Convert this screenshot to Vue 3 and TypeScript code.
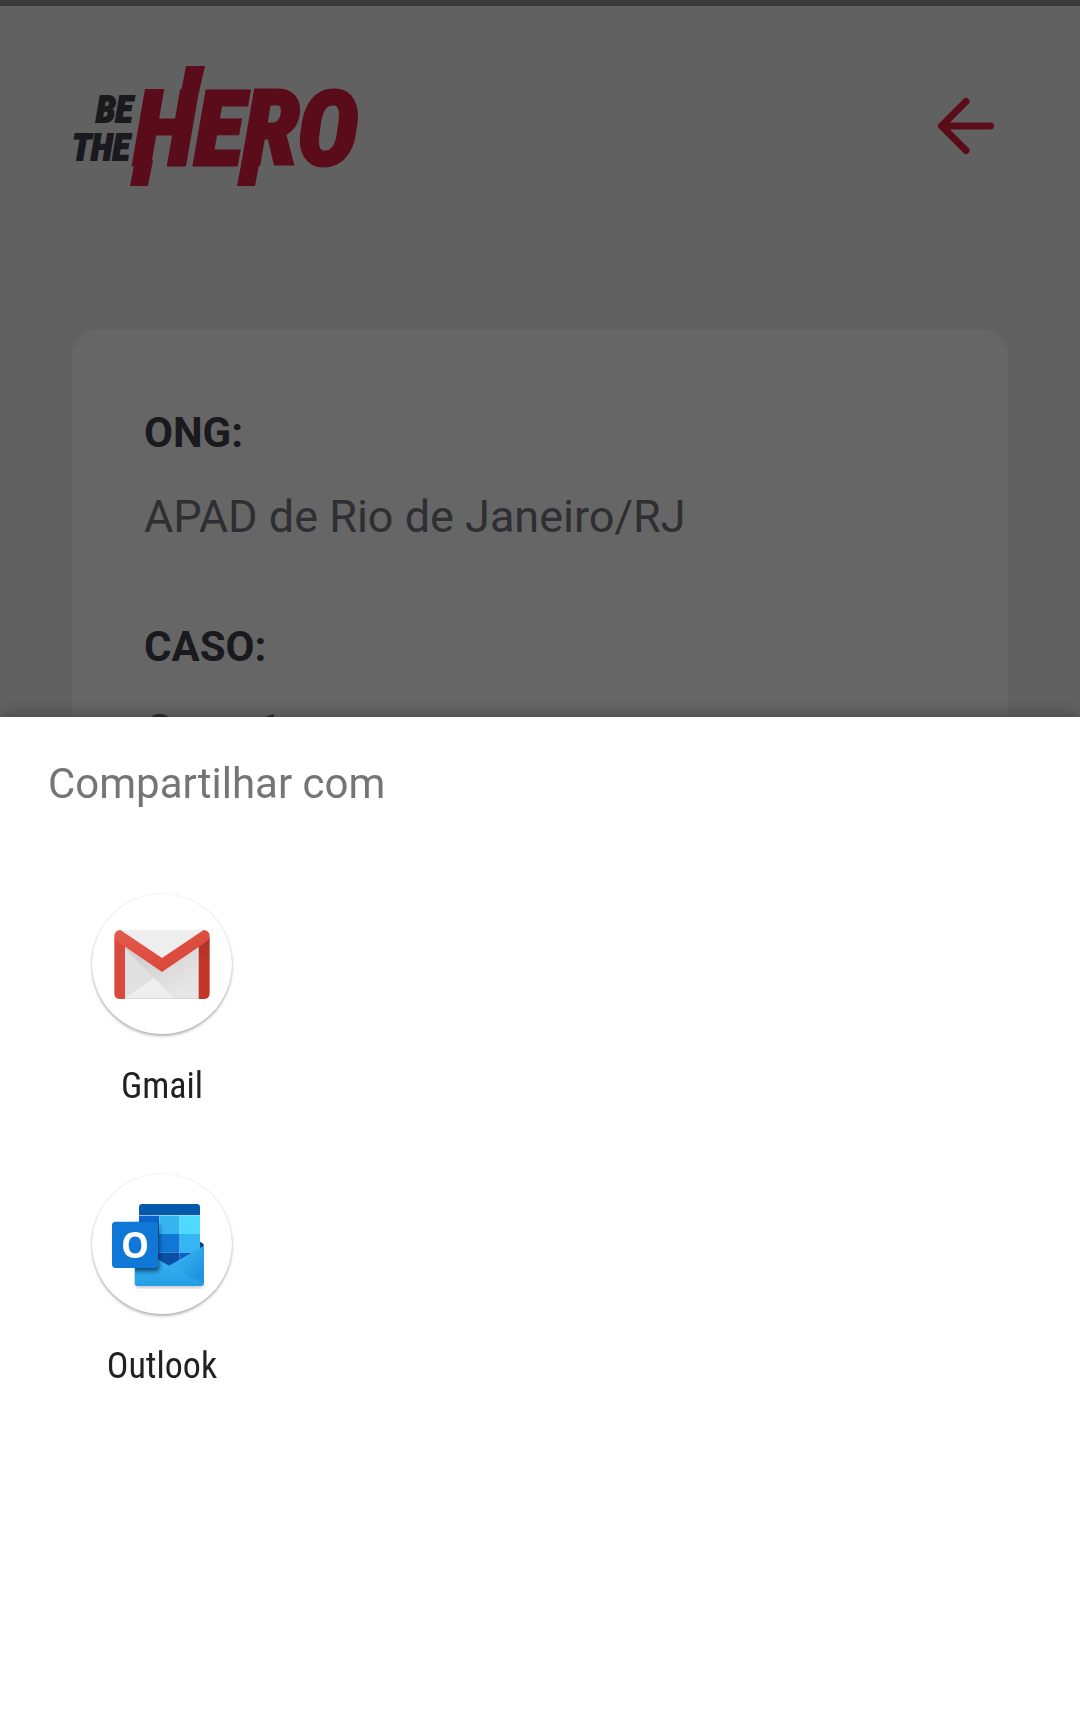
<script setup lang="ts">
interface Detail {
  label: string
  value: string
}

interface Target {
  id: 'gmail' | 'outlook'
  name: string
}

const details: Detail[] = [
  { label: 'ONG:', value: 'APAD de Rio de Janeiro/RJ' },
  { label: 'CASO:', value: 'Caso 1' },
]

const targets: Target[] = [
  { id: 'gmail', name: 'Gmail' },
  { id: 'outlook', name: 'Outlook' },
]
</script>

<template>
  <div class="screen">
    <div class="status-strip"></div>
    <header class="header">
      <svg class="logo" viewBox="0 0 286 120" role="img" aria-label="Be The Hero">
        <g class="logo-small">
          <text x="24" y="56">BE</text>
          <text x="0" y="94">THE</text>
        </g>
        <g class="logo-big">
          <path d="M114 0H133L127 26H109ZM63 94H81L76 120H58ZM170 94H188L183 120H165Z" />
          <text x="62" y="98">HERO</text>
        </g>
      </svg>
      <button class="back" type="button" aria-label="Voltar">
        <svg viewBox="0 0 24 24">
          <path d="M19 12H5M12 19L5 12L12 5" />
        </svg>
      </button>
    </header>
    <main class="card">
      <dl v-for="item in details" :key="item.label" class="detail">
        <dt>{{ item.label }}</dt>
        <dd>{{ item.value }}</dd>
      </dl>
    </main>
  </div>

  <div class="scrim"></div>

  <section class="sheet" role="dialog" aria-labelledby="share-title">
    <h2 id="share-title">Compartilhar com</h2>
    <ul class="targets">
      <li v-for="target in targets" :key="target.id">
        <button class="target" type="button">
          <svg v-if="target.id === 'gmail'" class="app-icon" viewBox="36 42 420 420" aria-hidden="true">
            <defs>
              <linearGradient id="g-red" x1="0" y1="0" x2="1" y2="1">
                <stop offset="0" stop-color="#e35b4e" />
                <stop offset="1" stop-color="#d84133" />
              </linearGradient>
              <linearGradient id="g-side" x1="0" y1="0" x2="0" y2="1">
                <stop offset="0" stop-color="#a93127" />
                <stop offset="0.4" stop-color="#c23529" />
              </linearGradient>
              <linearGradient id="g-fold" x1="0" y1="0" x2="1" y2="1">
                <stop offset="0.2" stop-color="#cfcfcf" />
                <stop offset="0.8" stop-color="#e6e6e6" />
              </linearGradient>
            </defs>
            <path d="M120 150H372V357H120Z" fill="#eeeeee" />
            <path d="M135 202L246 276L356 202V357H284L135 208Z" fill="url(#g-fold)" />
            <path d="M135 206L222 294L135 354Z" fill="#e0e0e0" />
            <path d="M222 294L135 354V357H284Z" fill="#eeeeee" />
            <path d="M135 355H356V357H135Z" fill="#d2d2d2" />
            <path d="M103 170L135 190V357H121Q103 357 103 339Z" fill="#d84a3d" />
            <path d="M356 190L389 170V339Q389 357 371 357H356Z" fill="url(#g-side)" />
            <path d="M103 168Q104 152 121 150L246 234L371 150Q388 152 389 168Q389 178 381 184L246 276L111 184Q103 178 103 168Z" fill="url(#g-red)" />
          </svg>
          <svg v-else class="app-icon" viewBox="36 42 420 420" aria-hidden="true">
            <defs>
              <linearGradient id="o-body" x1="0" y1="0" x2="0" y2="1">
                <stop offset="0.3" stop-color="#36b6f2" />
                <stop offset="1" stop-color="#259de6" />
              </linearGradient>
              <linearGradient id="o-flap" x1="0.2" y1="0.3" x2="0.7" y2="0.9">
                <stop offset="0" stop-color="#33b1f0" />
                <stop offset="1" stop-color="#2294e0" />
              </linearGradient>
              <filter id="o-shadow" x="-20%" y="-20%" width="150%" height="150%">
                <feGaussianBlur stdDeviation="6" />
              </filter>
              <clipPath id="o-clip">
                <path d="M177 142Q177 132 187 132H350Q360 132 360 142V250L372 258V368Q372 378 362 378H174Q164 378 164 368V132Z" />
              </clipPath>
            </defs>
            <path d="M166 370H370V376Q368 382 360 382H176Q168 382 166 376Z" fill="#000000" opacity="0.3" filter="url(#o-shadow)" />
            <path d="M358 244L370 251Q373 254 370 260L358 268Z" fill="#103f88" />
            <path d="M177 166V142Q177 132 187 132H350Q360 132 360 142V166Z" fill="#0559ab" />
            <path d="M177 167H238V222H177Z" fill="#0c64cf" />
            <path d="M238 167H299V222H238Z" fill="#34b5f0" />
            <path d="M299 167H360V222H299Z" fill="#50d9ff" />
            <path d="M177 222H299V278H177Z" fill="#1077d6" />
            <path d="M299 222H360V278H299Z" fill="#35b5f1" />
            <path d="M177 278H299V325H177Z" fill="#0b4fa6" />
            <path d="M299 278H360V310H299Z" fill="#0c62c6" />
            <path d="M164 260L268 317L372 258V368Q372 378 362 378H174Q164 378 164 368Z" fill="url(#o-body)" />
            <path d="M268 317L372 258V372Z" fill="url(#o-flap)" />
            <g clip-path="url(#o-clip)">
              <rect x="100" y="192" width="138" height="142" rx="10" fill="#002040" opacity="0.7" filter="url(#o-shadow)" />
            </g>
            <rect x="96" y="185" width="138" height="139" rx="11" fill="#0f78d6" />
            <text class="outlook-o" x="165" y="293" text-anchor="middle">O</text>
          </svg>
          <span>{{ target.name }}</span>
        </button>
      </li>
    </ul>
  </section>
</template>

<style>
body {
  margin: 0;
  background: #f2f2f2;
}
</style>

<style scoped>
.screen {
  height: 100vh;
  overflow: hidden;
  background: #f2f2f2;
  font-family: Roboto, sans-serif;
}

.status-strip {
  height: 6px;
  background: #949494;
}

.header {
  display: flex;
  align-items: center;
  justify-content: space-between;
  padding: 60px 72px 0;
}

.logo {
  width: 286px;
  height: 120px;
  overflow: visible;
  font-family: "Roboto Condensed", "Liberation Sans Narrow", sans-serif;
  font-style: italic;
  font-weight: 700;
}

.logo-small {
  font-size: 36px;
  fill: #41414d;
  stroke: #41414d;
  stroke-width: 2px;
}

.logo-big {
  fill: #e02041;
}

.logo-big text {
  font-size: 102px;
  stroke: #e02041;
  stroke-width: 5px;
}

.back {
  padding: 0;
  border: 0;
  background: none;
}

.back svg {
  display: block;
  width: 84px;
  height: 84px;
  fill: none;
  stroke: #e02041;
  stroke-width: 2;
  stroke-linecap: round;
  stroke-linejoin: round;
}

.card {
  display: flex;
  flex-direction: column;
  gap: 70px;
  margin: 144px 72px 0;
  padding: 73px 72px;
  border-radius: 24px;
  background: #ffffff;
}

.detail {
  display: flex;
  flex-direction: column;
  gap: 24px;
  margin: 0;
  line-height: 60px;
}

.detail dt {
  font-size: 42px;
  font-weight: 700;
  color: #41414d;
}

.detail dd {
  margin: 0;
  font-size: 45px;
  color: #737380;
}

.scrim {
  position: fixed;
  inset: 0;
  background: rgba(0, 0, 0, 0.6);
}

.sheet {
  position: fixed;
  right: 0;
  bottom: 0;
  left: 0;
  padding: 37px 36px 320px;
  background: #ffffff;
  box-shadow: 0 0 16px rgba(0, 0, 0, 0.35);
  font-family: Roboto, sans-serif;
}

.sheet h2 {
  margin: 0 12px 80px;
  font-size: 42px;
  font-weight: 400;
  line-height: 60px;
  color: #757575;
}

.targets {
  display: flex;
  flex-direction: column;
  gap: 64px;
  width: 25%;
  margin: 0;
  padding: 0;
  list-style: none;
}

.target {
  display: flex;
  flex-direction: column;
  align-items: center;
  gap: 28px;
  width: 100%;
  padding: 0;
  border: 0;
  background: none;
  font-family: "Roboto Condensed", "Liberation Sans Narrow", sans-serif;
  font-size: 36px;
  line-height: 48px;
  color: #212121;
}

.app-icon {
  width: 140px;
  height: 140px;
  border-radius: 50%;
  background: #ffffff;
  box-shadow: 0 2px 3px rgba(0, 0, 0, 0.3), 0 0 1px rgba(0, 0, 0, 0.15);
}

.outlook-o {
  font-family: "Open Sans", sans-serif;
  font-size: 106px;
  font-weight: 700;
  fill: #ffffff;
}
</style>
